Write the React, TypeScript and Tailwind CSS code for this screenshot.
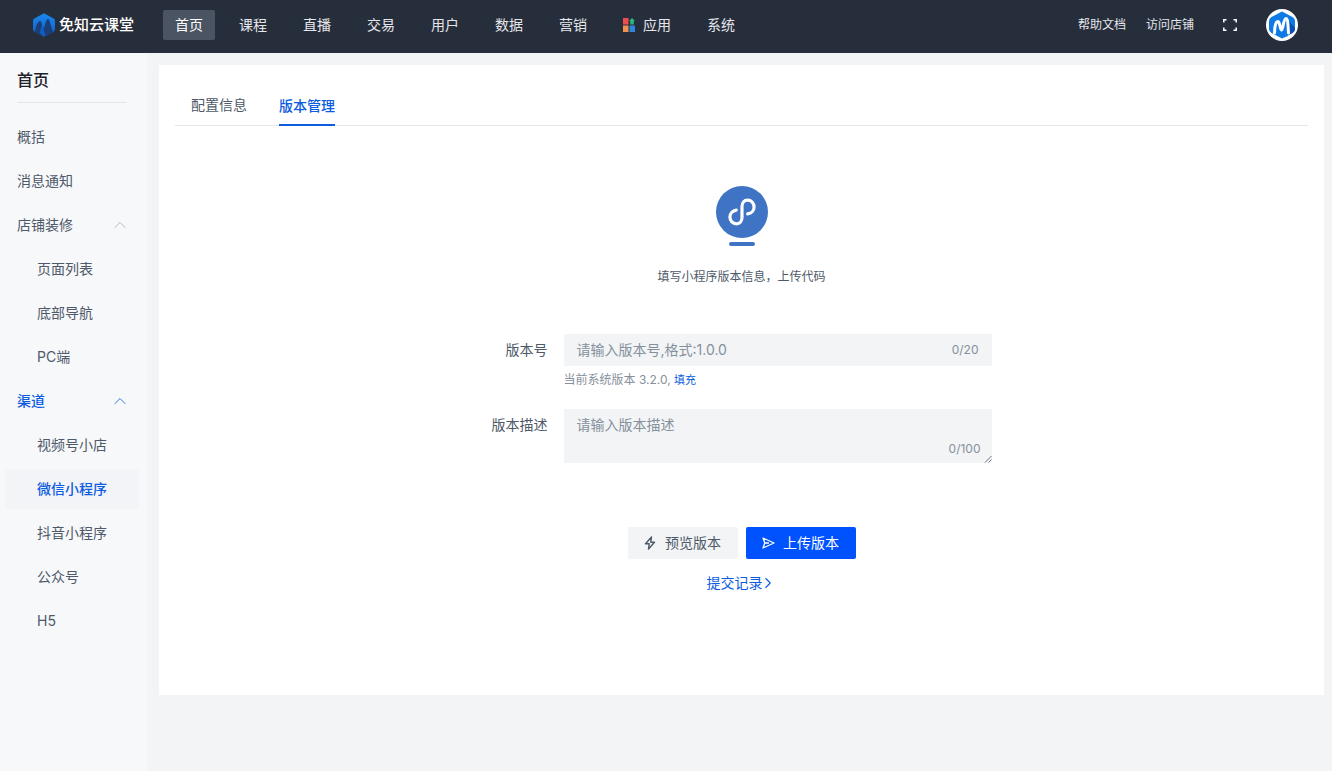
import { ChevronRight, ChevronUp } from 'lucide-react';

const NAV = ['首页', '课程', '直播', '交易', '用户', '数据', '营销', '应用', '系统'];

const SIDE = [
  { label: '概括' },
  { label: '消息通知' },
  { label: '店铺装修', arrow: true },
  { label: '页面列表', sub: true },
  { label: '底部导航', sub: true },
  { label: 'PC端', sub: true },
  { label: '渠道', arrow: true, open: true },
  { label: '视频号小店', sub: true },
  { label: '微信小程序', sub: true, active: true },
  { label: '抖音小程序', sub: true },
  { label: '公众号', sub: true },
  { label: 'H5', sub: true },
];

// ── Logos ────────────────────────────────────────────────────────────────────
function Logo() {
  return (
    <svg width="22" height="24" viewBox="0 0 22 24">
      <defs>
        <linearGradient id="lg" x1="0" y1="0" x2="0" y2="1">
          <stop offset="0" stopColor="#1b87ee" />
          <stop offset="1" stopColor="#0f5fc4" />
        </linearGradient>
      </defs>
      <path d="M11 0.3 L20.6 5.6 Q22 6.4 22 8 V16 Q22 17.6 20.6 18.4 L11 23.7 L1.4 18.4 Q0 17.6 0 16 V8 Q0 6.4 1.4 5.6 Z" fill="url(#lg)" />
      <path d="M2 19 C3 12 5 8 7 8 C9 8 9 15 10.5 15 C12 15 12.5 6 15 6 C17 6 17.5 13 20 18.5 L11 23.7 Z" fill="#1a3f78" />
      <path d="M7 20 C7.5 15 8.5 12.5 9.5 13 C10.5 14 11 19 12.5 22.5 L11 23.7 Z" fill="#0f5fc4" />
    </svg>
  );
}

function Avatar() {
  return (
    <div className="w-8 h-8 rounded-full bg-white flex items-center justify-center">
      <svg width="28" height="28" viewBox="0 0 28 28">
        <path d="M14 0.5 L24.5 6 Q27 7.4 27 10 V18 Q27 20.6 24.5 22 L14 27.5 L3.5 22 Q1 20.6 1 18 V10 Q1 7.4 3.5 6 Z" fill="#0f7ae5" />
        <path d="M19 8 L27 17 V18 Q27 20.6 24.5 22 L14 27.5 L20 25 Z" fill="#0b4fb0" />
        <path
          d="M6.5 22 C6.5 15 8 10.5 10 10.5 C12 10.5 12 19 13.5 19 C15 19 15.5 7.5 18 7.5 C20 7.5 20 15 20.5 22"
          fill="none"
          stroke="#fff"
          strokeWidth="3"
          strokeLinecap="round"
        />
      </svg>
    </div>
  );
}

function AppsIcon() {
  return (
    <svg width="12" height="14" viewBox="0 0 12 14">
      <rect x="0" y="0" width="5.5" height="6.5" fill="#ee4d50" />
      <path d="M9 0 L12 3 L10.8 3 V6.5 H7.2 V3 L6 3 Z" fill="#2cb67d" />
      <rect x="0" y="7.5" width="5.5" height="6.5" fill="#f0924e" />
      <rect x="6.5" y="7.5" width="5.5" height="6.5" fill="#2f86e0" />
    </svg>
  );
}

function FullscreenIcon() {
  return (
    <svg width="14" height="12" viewBox="0 0 14 12" fill="none" stroke="#fff" strokeWidth="1.5">
      <path d="M0.8 3.5 V0.8 H3.5 M10.5 0.8 H13.2 V3.5 M13.2 8.5 V11.2 H10.5 M3.5 11.2 H0.8 V8.5" />
    </svg>
  );
}

function MiniProgramIcon() {
  return (
    <div className="flex flex-col items-center">
      <div className="w-[52px] h-[52px] rounded-full bg-[#3f74c4] flex items-center justify-center">
        <svg width="28" height="28" viewBox="3 3 22 22" fill="none" stroke="#fff" strokeWidth="2.5" strokeLinecap="round">
          <path d="M9.5 12.5 C6.5 13 4.5 15.2 4.5 18 C4.5 21 6.8 23.3 9.6 23.3 C12.4 23.3 14 21 14 18.3 V9.7 C14 7 15.6 4.7 18.4 4.7 C21.2 4.7 23.5 7 23.5 10 C23.5 12.8 21.5 15 18.5 15.5" />
        </svg>
      </div>
      <div className="w-[26px] h-[4px] rounded-full bg-[#3f74c4] mt-[4px]" />
    </div>
  );
}

function BoltIcon() {
  return (
    <svg width="12" height="14" viewBox="0 0 12 14" fill="none" stroke="#4e5969" strokeWidth="1.4" strokeLinejoin="round">
      <path d="M7.5 1 L1.5 7.8 H5.2 L4.5 13 L10.5 6.2 H6.8 Z" />
    </svg>
  );
}

function PlaneIcon() {
  return (
    <svg width="13" height="12" viewBox="0 0 13 12" fill="none" stroke="#fff" strokeWidth="1.3" strokeLinejoin="round">
      <path d="M1 1 L12 6 L1 11 L2.8 6 Z M2.8 6 H7" />
    </svg>
  );
}

// ── Page ─────────────────────────────────────────────────────────────────────
export default function App() {
  return (
    <div className="w-[1332px] h-[771px] overflow-hidden flex flex-col bg-[#f2f4f5] font-['Inter','Noto_Sans_CJK_SC',sans-serif]">
      {/* Header */}
      <header className="h-[53px] flex-none bg-[#272e3b] flex items-center pb-[3px]">
        <div className="w-[163px] flex-none flex items-center gap-[4px] pl-[33px]">
          <Logo />
          <span className="text-[15px] font-medium text-white whitespace-nowrap">免知云课堂</span>
        </div>
        <nav className="flex items-center gap-3">
          {NAV.map((n, i) => (
            <div
              key={n}
              className={`h-[30px] px-3 rounded-[2px] flex items-center gap-2 text-sm ${i === 0 ? 'bg-[#4a5462] text-white' : 'text-[#e5e6eb]'}`}
            >
              {n === '应用' && <AppsIcon />}
              {n}
            </div>
          ))}
        </nav>
        <div className="ml-auto flex items-center pr-[34px]">
          <span className="text-xs text-[#e5e6eb]">帮助文档</span>
          <span className="text-xs text-[#e5e6eb] ml-5">访问店铺</span>
          <span className="ml-[29px]"><FullscreenIcon /></span>
          <span className="ml-[29px]"><Avatar /></span>
        </div>
      </header>

      <div className="flex-1 flex min-h-0">
        {/* Sidebar */}
        <aside className="w-[147px] flex-none bg-[#f7f8fa] pl-[5px] pr-[8px]">
          <div className="mx-3 h-[50px] pt-1 flex items-center border-b border-[#e5e6eb] text-base font-medium text-[#1d2129]">首页</div>
          <div className="mt-[14px] flex flex-col gap-1">
            {SIDE.map((s) => (
              <div
                key={s.label}
                className={`h-10 pr-[9px] flex items-center justify-between rounded-[4px] text-sm ${s.sub ? 'pl-8' : 'pl-3'} ${s.active ? 'bg-[#f2f4f7] text-[#0b5ce0] font-medium' : s.open ? 'text-[#0b5ce0] font-medium' : 'text-[#4e5969]'}`}
              >
                {s.label}
                {s.arrow && <ChevronUp size={20} strokeWidth={1} className={s.open ? 'text-[#0b5ce0]' : 'text-[#a9aeb8]'} />}
              </div>
            ))}
          </div>
        </aside>

        {/* Content */}
        <main className="flex-1 pl-3 pr-2 pt-3">
          <div className="h-[630px] bg-white px-4 flex flex-col">
            <div className="h-[61px] flex-none flex items-end gap-8 px-4 border-b border-[#e5e6eb]">
              <div className="h-[38px] pt-2 text-sm text-[#4e5969]">配置信息</div>
              <div className="h-[38px] pt-2 text-sm font-medium text-[#0b5ce0] border-b-2 border-[#0b5ce0] -mb-px">版本管理</div>
            </div>

            <div className="flex flex-col items-center pt-[60px]">
              <MiniProgramIcon />
              <p className="mt-[23px] text-xs text-[#4e5969]">填写小程序版本信息，上传代码</p>

              <div className="w-[500px] mt-[49px]">
                <div className="flex gap-4">
                  <label className="w-[56px] flex-none h-8 flex items-center justify-end text-sm text-[#4e5969]">版本号</label>
                  <div className="flex-1">
                    <div className="h-8 bg-[#f2f4f5] px-[13px] flex items-center justify-between">
                      <span className="text-sm text-[#86909c]">请输入版本号,格式:1.0.0</span>
                      <span className="text-xs text-[#86909c]">0/20</span>
                    </div>
                    <p className="mt-[6px] text-xs leading-4 text-[#86909c]">
                      当前系统版本 3.2.0, <span className="text-[#0b5ce0] text-[11px]">填充</span>
                    </p>
                  </div>
                </div>
                <div className="flex gap-4 mt-[21px]">
                  <label className="w-[56px] flex-none h-8 flex items-center justify-end text-sm text-[#4e5969]">版本描述</label>
                  <div className="relative flex-1 h-[54px] bg-[#f2f4f5] pl-[13px] pt-[3px]">
                    <span className="text-sm text-[#86909c]">请输入版本描述</span>
                    <span className="absolute right-[11px] bottom-[6px] text-xs text-[#86909c]">0/100</span>
                    <svg className="absolute right-0 bottom-0" width="8" height="8" viewBox="0 0 8 8" stroke="#4e5969" strokeWidth="0.8">
                      <path d="M1 7.5 L7.5 1 M4.5 7.5 L7.5 4.5" />
                    </svg>
                  </div>
                </div>
              </div>

              <div className="flex gap-2 mt-[64px]">
                <button className="w-[110px] h-8 rounded-[2px] bg-[#f2f4f5] text-sm text-[#4e5969] flex items-center justify-center gap-[9px]">
                  <BoltIcon />
                  预览版本
                </button>
                <button className="w-[110px] h-8 rounded-[2px] bg-[#0052ff] text-sm text-white flex items-center justify-center gap-[8px]">
                  <PlaneIcon />
                  上传版本
                </button>
              </div>
              <div className="mt-[14px] flex items-center text-sm text-[#0b5ce0]">
                提交记录
                <ChevronRight size={18} strokeWidth={1.5} className="-ml-[4px]" />
              </div>
            </div>
          </div>
        </main>
      </div>
    </div>
  );
}
